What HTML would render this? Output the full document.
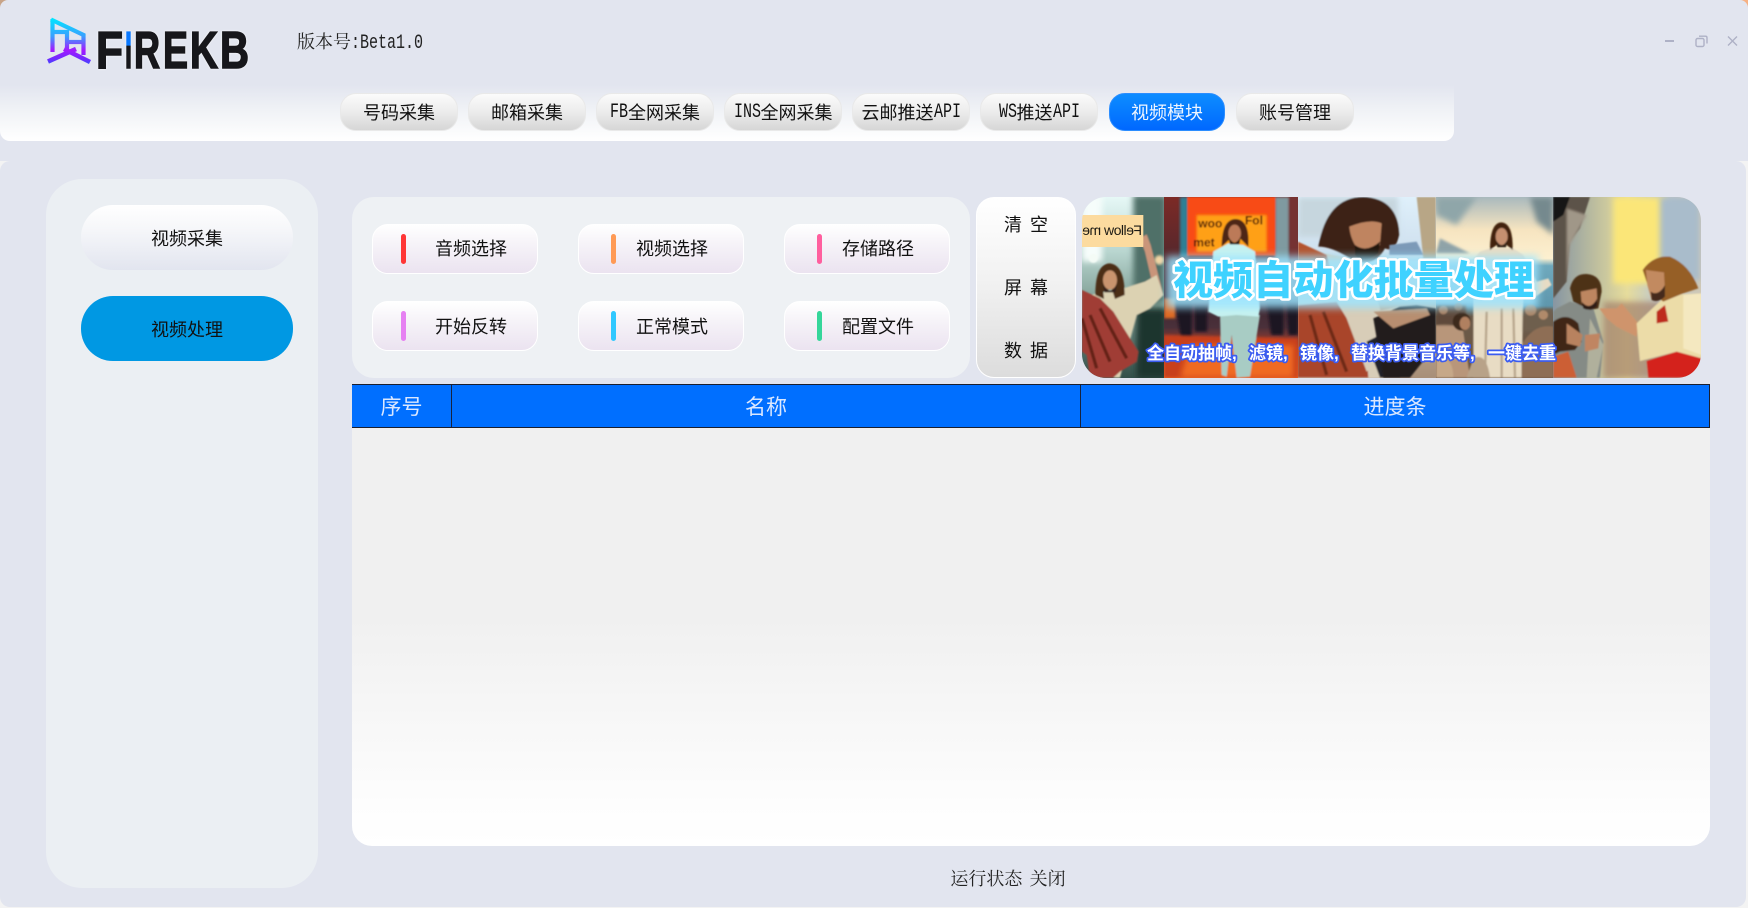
<!DOCTYPE html>
<html lang="zh-CN">
<head>
<meta charset="utf-8">
<title>FIREKB</title>
<style>
html,body{margin:0;padding:0;width:1748px;height:908px;overflow:hidden;background:#f3f3f3}
body{position:relative;font-family:"Liberation Sans","Noto Sans CJK SC",sans-serif;color:#111}
.a{position:absolute;box-sizing:border-box}
.c{display:flex;align-items:center;justify-content:center;white-space:nowrap}
.top{left:0;top:0;width:1748px;height:161px;background:#e2e5ef;border-radius:8px 8px 0 0}
.low{left:0;top:161px;width:1746px;height:746px;background:#e2e5ef;border-radius:10px}
.bar{left:0;top:85px;width:1454px;height:56px;background:linear-gradient(#e2e5ef 0%,#f0f2f6 45%,#fff 100%);border-radius:0 0 10px 10px}
.nav{top:93px;height:38px;font-size:18px;border:1px solid #e9e9e9;border-radius:16px;background:linear-gradient(#fbfbfb 0%,#ececec 50%,#d6d6d6 100%)}
.nav.on{background:linear-gradient(#0d8dff,#0068ff);color:#eef5ff;border-color:#2b8dff}
.m{display:inline-block;font-family:"Liberation Mono",monospace;font-size:20px;transform:scaleX(.75);transform-origin:left center;text-align:left;white-space:nowrap}
.side{left:46px;top:179px;width:272px;height:709px;background:#ebeff3;border-radius:36px}
.sb{left:81px;width:212px;height:65px;border-radius:32px;font-size:18px}
.pan{left:352px;top:197px;width:618px;height:181px;background:#eef1f4;border-radius:22px}
.gb{width:166px;height:50px;border:1px solid #fff;border-radius:16px;background:linear-gradient(#fff 0%,#f6f3f8 40%,#ebe3f0 100%)}
.gb i{position:absolute;left:28px;top:9px;width:5px;height:30px;border-radius:3px}
.gb span{position:absolute;left:62px;top:0;height:48px;line-height:48px;font-size:18px;white-space:nowrap}
.x i{left:32px}
.x span{left:57px}
.r2 span{top:1px}
.clr{left:976px;top:197px;width:100px;height:181px;border:1px solid #fff;border-radius:18px;background:linear-gradient(#fff 0%,#f2f2f2 45%,#dcdcdc 100%)}
.clr span{position:absolute;left:0;width:98px;text-align:center;font-size:18px;line-height:24px}
.clr b{font-weight:400;display:inline-block;width:8px}
.hd{left:352px;top:384px;width:1358px;height:44px;background:#006fff;border-top:1px solid #1b1f2e;border-bottom:1px solid #1b1f2e;border-right:1px solid #1b1f2e}
.hd div{position:absolute;top:0;height:42px;font-size:21px;color:#dbe8ff}
.hd s{position:absolute;top:0;width:1px;height:42px;background:#16233f}
.tb{left:352px;top:428px;width:1358px;height:418px;border-radius:0 0 20px 20px;background:linear-gradient(#f0f0f0 0%,#f0f0f0 45%,#fdfdfd 90%,#fff 100%)}
.ser{font-family:"Noto Serif CJK SC","Liberation Serif",serif;font-size:18px;color:#222;white-space:nowrap}
.ser em{font-style:normal;font-family:"Liberation Mono",monospace;font-size:12px}
svg text{font-family:"Liberation Sans","Noto Sans CJK SC",sans-serif}
</style>
</head>
<body>
<div class="a" style="left:0;top:0;width:12px;height:12px;background:#c8a488"></div>
<div class="a" style="left:1736px;top:0;width:12px;height:12px;background:#f6b184"></div>
<div class="a top"></div>
<div class="a low"></div>
<div class="a bar"></div>

<svg class="a" style="left:40px;top:12px" width="225" height="65" viewBox="0 0 225 65">
<defs>
<linearGradient id="lg" gradientUnits="userSpaceOnUse" x1="0" y1="6" x2="0" y2="58">
<stop offset="0" stop-color="#00e8ff"/><stop offset=".35" stop-color="#3aa0ff"/><stop offset=".62" stop-color="#a418ff"/><stop offset=".8" stop-color="#6a2cff"/><stop offset="1" stop-color="#0a6cff"/></linearGradient>
<linearGradient id="ig" gradientUnits="userSpaceOnUse" x1="0" y1="18" x2="0" y2="58">
<stop offset="0" stop-color="#0a78ff"/><stop offset=".38" stop-color="#0a78ff"/><stop offset=".4" stop-color="#17171b"/><stop offset="1" stop-color="#17171b"/></linearGradient>
</defs>
<g fill="none" stroke="url(#lg)" stroke-width="4.2">
<path d="M12.5 7V40"/>
<path d="M11 7.5L43.5 23V43"/>
<path d="M12 20H27V40"/>
<path d="M28 30H42"/>
<path d="M8 49.5L36 37" stroke-width="4.6"/>
<path d="M24 37L50 50" stroke-width="4.6"/>
</g>
<g font-size="52" font-weight="700" fill="#17171b" stroke="#17171b" stroke-width="1.6" style="filter:drop-shadow(0 0 1px #fff)">
<text x="56" y="56" textLength="27" lengthAdjust="spacingAndGlyphs" style="font-family:'Liberation Sans',sans-serif">F</text>
<text x="85" y="56" textLength="7" lengthAdjust="spacingAndGlyphs" fill="url(#ig)" stroke="url(#ig)" style="font-family:'Liberation Sans',sans-serif">I</text>
<text x="94" y="56" textLength="26" lengthAdjust="spacingAndGlyphs" style="font-family:'Liberation Sans',sans-serif">R</text>
<text x="123" y="56" textLength="25" lengthAdjust="spacingAndGlyphs" style="font-family:'Liberation Sans',sans-serif">E</text>
<text x="150" y="56" textLength="28" lengthAdjust="spacingAndGlyphs" style="font-family:'Liberation Sans',sans-serif">K</text>
<text x="180" y="56" textLength="29" lengthAdjust="spacingAndGlyphs" style="font-family:'Liberation Sans',sans-serif">B</text>
</g>
</svg>

<div class="a ser" style="left:297px;top:27px;line-height:28px">版本号<span class="m" style="width:72px;color:#222">:Beta1.0</span></div>

<svg class="a" style="left:1660px;top:30px" width="82" height="22" viewBox="0 0 82 22" fill="none" stroke="#aeb1c6" stroke-width="1.4">
<path d="M5 11H14" stroke-width="2"/>
<rect x="36" y="8.5" width="8" height="8" rx="1.5"/>
<path d="M39 6.2H45.5Q47 6.2 47 7.7V13.5"/>
<path d="M68 6.5L77 15.5M77 6.5L68 15.5"/>
</svg>

<div class="a c nav" style="left:340px;width:118px">号码采集</div>
<div class="a c nav" style="left:468px;width:118px">邮箱采集</div>
<div class="a c nav" style="left:596px;width:118px"><span class="m" style="width:18px">FB</span>全网采集</div>
<div class="a c nav" style="left:724px;width:118px"><span class="m" style="width:27px">INS</span>全网采集</div>
<div class="a c nav" style="left:852px;width:118px">云邮推送<span class="m" style="width:27px">API</span></div>
<div class="a c nav" style="left:980px;width:118px"><span class="m" style="width:18px">WS</span>推送<span class="m" style="width:27px">API</span></div>
<div class="a c nav on" style="left:1109px;width:116px">视频模块</div>
<div class="a c nav" style="left:1236px;width:118px">账号管理</div>

<div class="a side"></div>
<div class="a c sb" style="top:205px;background:linear-gradient(#fff 0%,#f5f6f9 40%,#e2e5ef 100%)">视频采集</div>
<div class="a c sb" style="top:296px;background:#0098e3">视频处理</div>

<div class="a pan"></div>
<div class="a gb" style="left:372px;top:224px"><i style="background:#ff3636"></i><span>音频选择</span></div>
<div class="a gb x" style="left:578px;top:224px"><i style="background:#ff9a55"></i><span>视频选择</span></div>
<div class="a gb x" style="left:784px;top:224px"><i style="background:#ff5f9e"></i><span>存储路径</span></div>
<div class="a gb r2" style="left:372px;top:301px"><i style="background:#e680f2"></i><span>开始反转</span></div>
<div class="a gb x r2" style="left:578px;top:301px"><i style="background:#30c8ff"></i><span>正常模式</span></div>
<div class="a gb x r2" style="left:784px;top:301px"><i style="background:#35d69a"></i><span>配置文件</span></div>

<div class="a clr">
<span style="top:15px">清<b></b>空</span>
<span style="top:78px">屏<b></b>幕</span>
<span style="top:141px">数<b></b>据</span>
</div>

<svg class="a" style="left:1082px;top:197px;border-radius:24px" width="619" height="181" viewBox="0 0 619 181">
<defs>
<filter id="b0" x="-5%" y="-5%" width="110%" height="110%"><feGaussianBlur stdDeviation="2.4"/></filter>
<filter id="b1" x="-10%" y="-10%" width="120%" height="120%"><feGaussianBlur stdDeviation="3"/></filter>
<filter id="b2" x="-20%" y="-20%" width="140%" height="140%"><feGaussianBlur stdDeviation="9"/></filter>
<filter id="gl" x="-5%" y="-30%" width="110%" height="160%"><feGaussianBlur stdDeviation="4"/></filter>
<linearGradient id="p1" x1="0" y1="0" x2="0" y2="1"><stop offset="0" stop-color="#e6f8f6"/><stop offset=".3" stop-color="#b9d6d0"/><stop offset=".6" stop-color="#7b9a90"/><stop offset="1" stop-color="#34504a"/></linearGradient>
<linearGradient id="p2" x1="0" y1="0" x2="0" y2="1"><stop offset="0" stop-color="#7c2a26"/><stop offset=".55" stop-color="#3c2630"/><stop offset=".72" stop-color="#4a303a"/><stop offset=".85" stop-color="#c8442a"/><stop offset="1" stop-color="#f0641e"/></linearGradient>
<linearGradient id="p3" x1="0" y1="0" x2="0" y2="1"><stop offset="0" stop-color="#dff0fb"/><stop offset=".3" stop-color="#cfe0ee"/><stop offset=".5" stop-color="#cbbda8"/><stop offset="1" stop-color="#a88f78"/></linearGradient>
<linearGradient id="p4" x1="0" y1="0" x2="0" y2="1"><stop offset="0" stop-color="#a9b9bd"/><stop offset=".18" stop-color="#f6e4c0"/><stop offset=".34" stop-color="#fdf0d0"/><stop offset=".38" stop-color="#6fa9bd"/><stop offset=".6" stop-color="#5f97ad"/><stop offset=".66" stop-color="#6a5a4a"/><stop offset="1" stop-color="#6e5640"/></linearGradient>
<linearGradient id="p5" x1="0" y1="0" x2="1" y2="0"><stop offset="0" stop-color="#8796a2"/><stop offset=".5" stop-color="#e6dc9c"/><stop offset=".72" stop-color="#bcc6ce"/><stop offset="1" stop-color="#cfc8b6"/></linearGradient>
<clipPath id="c1"><rect x="0" y="0" width="82" height="181"/></clipPath>
<clipPath id="c2"><rect x="82" y="0" width="134" height="181"/></clipPath>
<clipPath id="c3"><rect x="216" y="0" width="138" height="181"/></clipPath>
<clipPath id="c4"><rect x="354" y="0" width="117" height="181"/></clipPath>
<clipPath id="c5"><rect x="471" y="0" width="148" height="181"/></clipPath>
</defs>

<g clip-path="url(#c1)">
<rect x="0" y="0" width="82" height="181" fill="url(#p1)"/>
<g transform="translate(-2,-2) scale(.3333)"><g filter="url(#b0)">
<rect x="6" y="0" width="60" height="200" fill="#f6fdfb" filter="url(#b2)"/>
<rect x="160" y="0" width="100" height="320" fill="#4f7068" filter="url(#b2)"/>
<rect x="170" y="340" width="90" height="210" fill="#1e362f" filter="url(#b2)"/>
<circle cx="238" cy="195" r="14" fill="#f3d6a4" filter="url(#b1)"/>
<circle cx="40" cy="190" r="14" fill="#f4fbf6"/>
<path d="M180 130L200 118L212 150L250 300L225 300L195 170Z" fill="#c9957a"/>
<path d="M130 280L195 260L230 240L250 300L210 340L170 360L120 548L30 548L30 300Z" fill="#dcd2b2"/>
<path d="M6 285L60 310L100 350L175 470L170 500L120 530L100 548L30 548L20 480L6 470Z" fill="#a03c36"/>
<path d="M30 360L90 500M6 370L50 520M60 340L140 490" stroke="#642019" stroke-width="10" fill="none"/>
<path d="M46 300Q46 205 90 205Q134 210 134 300L105 312L95 280L70 290L72 312Z" fill="#4c2e18"/>
<ellipse cx="90" cy="255" rx="21" ry="29" fill="#c9946e"/>
<path d="M68 265Q90 310 112 265L106 292L74 292Z" fill="#33221a"/>
</g>
<rect x="6" y="60" width="184" height="96" fill="#fcdb9f"/>
</g>
<text transform="translate(60,38) scale(-1,1)" font-size="14" fill="#1c1a14" style="font-family:'Liberation Sans',sans-serif" letter-spacing="-.5">Fellow me</text>
</g>

<g clip-path="url(#c2)">
<rect x="82" y="0" width="134" height="181" fill="url(#p2)"/>
<g transform="translate(-2,-2) scale(.3333)"><g filter="url(#b0)">
<rect x="300" y="6" width="25" height="180" fill="#2e7f95" filter="url(#b1)"/>
<rect x="585" y="6" width="42" height="200" fill="#7f9aa0" filter="url(#b1)"/>
<rect x="628" y="6" width="30" height="200" fill="#743030"/>
<rect x="322" y="6" width="264" height="176" fill="#f84c12"/>
<rect x="350" y="60" width="210" height="110" fill="#ffa012" filter="url(#b1)"/>
<rect x="252" y="310" width="34" height="60" fill="#e06a20" filter="url(#b1)"/>
<text x="355" y="98" font-size="36" font-weight="700" fill="#451608" style="font-family:'Liberation Sans',sans-serif">woo</text>
<text x="495" y="88" font-size="36" font-weight="700" fill="#451608" style="font-family:'Liberation Sans',sans-serif">Fol</text>
<text x="340" y="155" font-size="36" font-weight="700" fill="#451608" style="font-family:'Liberation Sans',sans-serif">met</text>
<g fill="#1c1620" filter="url(#b1)">
<path d="M285 320h50v120h-30z"/><path d="M345 330h36v80h-36z"/><path d="M560 320h50v100h-36z"/><path d="M620 310h34v110h-28z"/>
</g>
<path d="M252 420L654 430V548H252Z" fill="#c8401f" filter="url(#b1)"/>
<path d="M330 450H640V548H520L300 548Z" fill="#f06a20" filter="url(#b2)"/>
<path d="M420 360L540 360L510 545L470 548L455 420L440 545L425 540Z" fill="#a8ccc4"/>
<path d="M385 350L400 170L445 145L490 150L525 170L540 340L535 365L470 360L415 365Z" fill="#c6f2f0"/>
<path d="M425 155Q425 72 468 72Q510 75 505 155L480 130L452 130Z" fill="#4e2614"/>
<ellipse cx="464" cy="115" rx="19" ry="26" fill="#bc7a58"/>
<path d="M445 125Q464 160 482 125L478 148L450 148Z" fill="#261712"/>
</g></g>
</g>

<g clip-path="url(#c3)">
<rect x="216" y="0" width="138" height="181" fill="url(#p3)"/>
<g transform="translate(-2,-2) scale(.3333)"><g filter="url(#b0)">
<rect x="654" y="6" width="300" height="120" fill="#c6d6de" filter="url(#b2)"/>
<path d="M654 140L730 175L860 200L960 550H654Z" fill="#d8cdb8"/>
<path d="M654 140L740 180L760 250L654 260Z" fill="#b4522e"/>
<path d="M654 330L770 320L860 470L865 548H654Z" fill="#a9452c"/>
<path d="M690 360L740 540M730 350L800 530" stroke="#6e2c18" stroke-width="10" fill="none"/>
<path d="M715 155Q740 6 850 6Q955 10 958 120Q945 175 915 160Q885 215 825 200Q760 155 715 155Z" fill="#3e2414"/>
<path d="M808 95Q870 70 905 85L900 150Q870 180 840 170Q812 140 808 95Z" fill="#bf8460"/>
<path d="M825 150Q860 175 900 140L895 175Q850 210 825 180Z" fill="#241610"/>
<path d="M800 370L955 335L960 450L860 530Z" fill="#d8cdb8"/>
<path d="M860 440L960 390V548H900Z" fill="#24222a"/>
</g></g>
<g transform="translate(308,-2) scale(.3333)"><g filter="url(#b0)">
<path d="M-2 150L80 140L100 180H-2Z" fill="#7d9ab8"/>
<path d="M80 6L138 6V190H100Z" fill="#b8a686"/>
<path d="M-50 370L30 335L80 330L138 340V450L60 548H-20Z" fill="#221c1c"/>
<path d="M-50 350L110 340L120 360L10 400Z" fill="#b88e70"/>
</g></g>
</g>

<g clip-path="url(#c4)">
<rect x="354" y="0" width="117" height="181" fill="url(#p4)"/>
<g transform="translate(308,-2) scale(.3333)"><g filter="url(#b0)">
<path d="M138 6H260L200 90L138 60Z" fill="#8fa6a9" filter="url(#b2)"/>
<path d="M420 6H490V120L440 80Z" fill="#74898e" filter="url(#b2)"/>
<path d="M150 130L240 175H138Z" fill="#8fa3a8" filter="url(#b1)"/>
<path d="M270 170L300 160L370 160L400 180L440 260L475 250L485 270L430 310L400 310L395 548H250L250 310L220 290L235 210Z" fill="#e8dcc4"/>
<path d="M290 350L285 548M335 340V548M370 340L375 548" stroke="#b8a68c" stroke-width="7" fill="none"/>
<path d="M300 165Q300 82 335 82Q370 85 368 165L350 150H320Z" fill="#42240f"/>
<ellipse cx="335" cy="125" rx="18" ry="26" fill="#c69070"/>
<path d="M318 135Q335 165 352 135L348 157L322 157Z" fill="#332014"/>
<path d="M138 390Q190 380 220 410L240 548H138Z" fill="#b8967a"/>
<path d="M138 330h90v60h-90z" fill="#5e4a3a" filter="url(#b1)"/>
<circle cx="215" cy="380" r="27" fill="#3e2a1c"/>
<ellipse cx="225" cy="385" rx="16" ry="20" fill="#b08060"/>
<circle cx="160" cy="345" r="13" fill="#a87e60"/><circle cx="205" cy="335" r="12" fill="#8f6e54"/>
<path d="M400 340h90v70h-90z" fill="#6e5e4e" filter="url(#b1)"/>
<circle cx="460" cy="360" r="14" fill="#b08a6a"/><circle cx="422" cy="345" r="17" fill="#ab8668"/>
<path d="M395 450Q430 385 490 395V548H395Z" fill="#8e6e54"/>
<path d="M250 490Q290 470 300 548H230Z" fill="#b8a288"/>
<path d="M140 490Q190 480 190 548H138Z" fill="#c6a888"/>
</g></g>
</g>

<g clip-path="url(#c5)">
<rect x="471" y="0" width="148" height="181" fill="url(#p5)"/>
<g transform="translate(308,-2) scale(.3333)"><g filter="url(#b0)">
<rect x="670" y="6" width="160" height="260" fill="#fbe678" filter="url(#b2)"/>
<rect x="810" y="6" width="120" height="250" fill="#a9bccb" filter="url(#b2)"/>
<path d="M490 6L600 6L570 100L540 140L530 260L490 310Z" fill="#5c5248"/>
<path d="M530 40L590 60L540 150L530 270Z" fill="#a09788" filter="url(#b1)"/>
<path d="M490 6H540L520 60L490 80Z" fill="#121414"/>
<path d="M640 320h280v230H640z" fill="#a4806a" opacity=".7" filter="url(#b2)"/>
<path d="M500 340L540 320L610 340L640 440L630 548H560L520 500L490 480V350Z" fill="#858b86"/>
<path d="M600 370L590 548H620L640 450Z" fill="#b0b09c"/>
<path d="M540 280Q550 235 590 237Q635 240 635 290L625 340L600 345L550 320Z" fill="#4e3019"/>
<path d="M572 290L620 280L622 320Q600 345 575 325Z" fill="#bd8660"/>
<path d="M575 320Q600 350 622 310L620 335Q600 350 580 340Z" fill="#2e1e14"/>
<path d="M490 380Q530 350 565 385L575 440L555 465L510 470L490 480Z" fill="#3f2616"/>
<path d="M530 385L578 420L570 455L530 445Z" fill="#b8825e"/>
<path d="M490 485L535 470L560 548H490Z" fill="#cc5e34"/>
<path d="M585 420L630 415L625 460L585 470Z" fill="#c08562"/>
<path d="M628 340L680 340L695 325L745 385L740 425L680 395L650 370Z" fill="#cf946c"/>
<path d="M740 385L830 300L935 295V490L860 470L750 498Z" fill="#ecdca8"/>
<path d="M880 300L935 295V480L880 460Z" fill="#f4e8c0"/>
<path d="M770 498L860 470L935 490L920 548H775Z" fill="#d4241a"/>
<path d="M800 350L825 330L835 380L800 385Z" fill="#be2a1e"/>
<path d="M758 225Q790 180 840 185Q900 210 925 280L880 295L820 320L780 290Z" fill="#965e26"/>
<path d="M768 225L822 232L825 290Q810 320 785 315L772 270Z" fill="#c28a60"/>
<path d="M782 290Q805 305 825 270L825 305Q805 325 785 315Z" fill="#452b1a"/>
</g></g>
</g>

<rect x="84" y="59" width="372" height="52" fill="#9ce4ff" opacity=".85" filter="url(#gl)"/>
<text x="91" y="97" font-size="40" font-weight="900" textLength="361" lengthAdjust="spacingAndGlyphs" fill="#3fd2ff" stroke="#fff" stroke-width="5" paint-order="stroke" stroke-linejoin="round">视频自动化批量处理</text>
<text y="162" font-size="17" font-weight="700" fill="#fff" stroke="#3b5cf0" stroke-width="3.5" paint-order="stroke" stroke-linejoin="round"><tspan x="65">全自动抽帧,</tspan><tspan x="167">滤镜,</tspan><tspan x="218">镜像,</tspan><tspan x="269">替换背景音乐等,</tspan><tspan x="406">一键去重</tspan></text>
</svg>

<div class="a hd">
<s style="left:99px"></s><s style="left:728px"></s>
<div class="c" style="left:0;width:99px">序号</div>
<div class="c" style="left:100px;width:628px">名称</div>
<div class="c" style="left:729px;width:628px">进度条</div>
</div>
<div class="a tb"></div>

<div class="a ser c" style="left:908px;top:864px;width:200px;height:28px">运行状态<em>&nbsp;</em>关闭</div>
</body>
</html>
